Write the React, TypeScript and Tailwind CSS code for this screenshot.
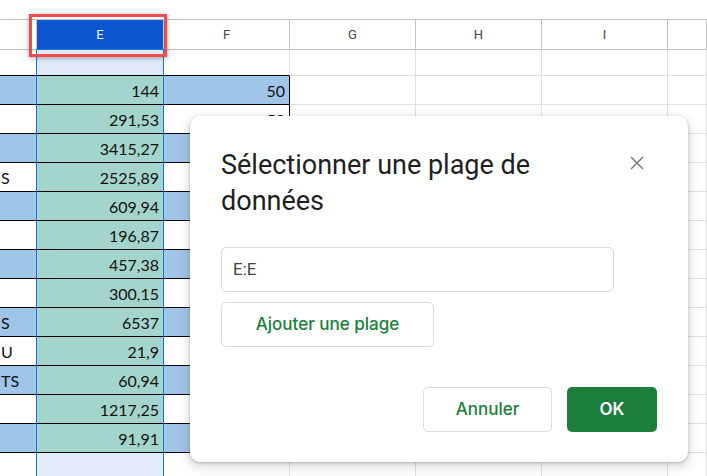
import React from "react";

type Row = { d?: string; e: string; f?: string; blue?: boolean };

const rows: Row[] = [
  { e: "144", f: "50", blue: true },
  { e: "291,53", f: "50" },
  { e: "3415,27", blue: true },
  { d: "S", e: "2525,89" },
  { e: "609,94", blue: true },
  { e: "196,87" },
  { e: "457,38", blue: true },
  { e: "300,15" },
  { d: "S", e: "6537", blue: true },
  { d: "U", e: "21,9" },
  { d: "TS", e: "60,94", blue: true },
  { e: "1217,25" },
  { e: "91,91", blue: true },
];

const cols = "grid grid-cols-[37px_127px_126px_126px_126px_126px_1fr]";
const heads = ["", "E", "F", "G", "H", "I", ""];

function Blank({ n }: { n: number }) {
  return (
    <>
      {Array.from({ length: n }).map((_, i) => (
        <div key={i} className="border-r border-b border-[#e1e1e1]" />
      ))}
    </>
  );
}

export default function App() {
  return (
    <div className="relative w-[707px] h-[476px] overflow-hidden bg-white font-['Roboto',sans-serif]">
      <div className="h-[19px]" />
      {/* column headers */}
      <div className={`${cols} h-[31px] border-t border-b border-[#c4c4c4]`}>
        {heads.map((h, i) => (
          <div
            key={i}
            className={`flex items-center justify-center border-r border-[#c4c4c4] text-[13px] ${
              h === "E" ? "bg-[#0b57d0] text-white" : "text-[#444746]"
            }`}
          >
            {h}
          </div>
        ))}
      </div>

      {/* first empty row */}
      <div className={`${cols} h-[26px]`}>
        <div className="border-r border-b border-r-[#e1e1e1] border-b-black" />
        <div className="bg-[#e1e9f9] border-r border-b border-r-[#e1e1e1] border-b-black" />
        <div className="border-r border-b border-r-[#e1e1e1] border-b-black" />
        <Blank n={4} />
      </div>

      {/* data rows */}
      <div className="font-['Lato',sans-serif] text-[16px] leading-[18px] text-[#111]">
        {rows.map((r, i) => (
          <div key={i} className={`${cols} h-[29px]`}>
            <div
              className={`flex items-end overflow-hidden pb-[4px] border-r border-b border-black ${
                r.blue ? "bg-[#9fc5e8]" : "bg-white"
              }`}
            >
              {r.d && <span className="whitespace-nowrap pl-[1px]">{r.d}</span>}
            </div>
            <div className="flex items-end justify-end pr-[4px] pb-[4px] bg-[#a3d5cd] border-r border-b border-black">
              {r.e}
            </div>
            <div
              className={`flex items-end justify-end pr-[4px] pb-[4px] border-r border-b border-black ${
                r.blue ? "bg-[#9fc5e8]" : "bg-white"
              }`}
            >
              {r.f}
            </div>
            <Blank n={4} />
          </div>
        ))}
      </div>

      {/* trailing row */}
      <div className={`${cols} h-[40px]`}>
        <div className="border-r border-b border-[#e1e1e1]" />
        <div className="bg-[#e3ecfc] border-r border-b border-[#e1e1e1]" />
        <div className="border-r border-b border-[#e1e1e1]" />
        <Blank n={4} />
      </div>

      {/* column selection outline */}
      <div className="absolute left-[36px] top-[49px] w-[128px] h-[440px] border border-[#1a73e8] pointer-events-none" />

      {/* red highlight on header E */}
      <div className="absolute left-[29px] top-[14px] w-[138px] h-[43px] border-[3px] border-[#f14b4b] shadow-[0_1px_5px_rgba(0,0,0,0.35)] pointer-events-none" />

      {/* dialog */}
      <div className="absolute left-[190px] top-[116px] w-[498px] h-[346px] flex flex-col rounded-[10px] bg-white px-[31px] pt-[31px] pb-[30px] shadow-[0_4px_10px_3px_rgba(60,64,67,0.15),0_1px_3px_rgba(60,64,67,0.3)]">
        <div className="flex items-start justify-between">
          <h2 className="w-[380px] text-[27px] leading-[36px] text-[#1f1f1f]">
            Sélectionner une plage de données
          </h2>
          <button className="-mt-[4px] flex h-10 w-10 items-center justify-center">
            <svg width="14" height="14" viewBox="0 0 14 14" fill="none">
              <path d="M1 1 L13 13 M13 1 L1 13" stroke="#7a7a7a" strokeWidth="1.5" />
            </svg>
          </button>
        </div>

        <div className="mt-[28px] flex h-[45px] w-[393px] items-center rounded-[5px] border border-[#dadce0] px-[11px] text-[17px] text-[#444746]">
          E:E
        </div>

        <button className="mt-[10px] h-[45px] w-[213px] rounded-[5px] border border-[#dadce0] font-['Inter',sans-serif] text-[17px] font-medium text-[#188038]">
          Ajouter une plage
        </button>

        <div className="mt-auto flex justify-end gap-[15px] font-['Inter',sans-serif] text-[17px] font-medium">
          <button className="h-[45px] w-[129px] rounded-[5px] border border-[#dadce0] text-[#188038]">
            Annuler
          </button>
          <button className="h-[45px] w-[90px] rounded-[5px] bg-[#1b7f3b] font-semibold text-white">
            OK
          </button>
        </div>
      </div>
    </div>
  );
}
